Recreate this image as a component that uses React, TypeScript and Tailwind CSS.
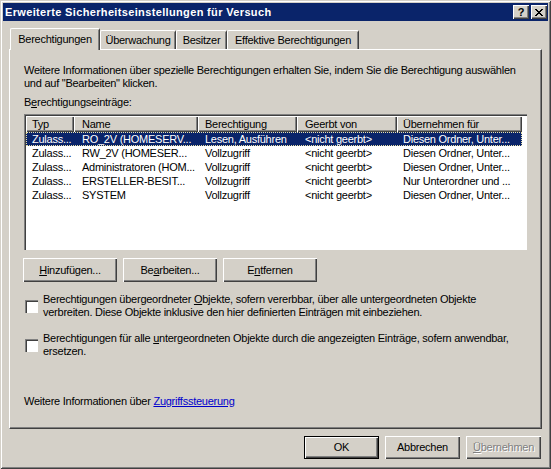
const raised =
  "shadow-[inset_1px_1px_0_#ffffff,inset_-1px_-1px_0_#404040,inset_-2px_-2px_0_#808080]";

const rows = [
  ["Zulass...", "RO_2V (HOMESERV...", "Lesen, Ausführen", "<nicht geerbt>", "Diesen Ordner, Unter..."],
  ["Zulass...", "RW_2V (HOMESER...", "Vollzugriff", "<nicht geerbt>", "Diesen Ordner, Unter..."],
  ["Zulass...", "Administratoren (HOM...", "Vollzugriff", "<nicht geerbt>", "Diesen Ordner, Unter..."],
  ["Zulass...", "ERSTELLER-BESIT...", "Vollzugriff", "<nicht geerbt>", "Nur Unterordner und ..."],
  ["Zulass...", "SYSTEM", "Vollzugriff", "<nicht geerbt>", "Diesen Ordner, Unter..."],
];

const cols = [
  { label: "Typ", w: "w-[48px]", pl: "pl-[6px]" },
  { label: "Name", w: "w-[124px]", pl: "pl-[8px]" },
  { label: "Berechtigung", w: "w-[99px]", pl: "pl-[7px]" },
  { label: "Geerbt von", w: "w-[100px]", pl: "pl-[8px]" },
  { label: "Übernehmen für", w: "w-[125px]", pl: "pl-[6px]" },
];

function Button({ children, w, primary }: { children: React.ReactNode; w: string; primary?: boolean }) {
  if (primary) {
    return (
      <div className={`${w} h-[23px] border border-black`}>
        <div className={`h-full flex items-center justify-center ${raised}`}>{children}</div>
      </div>
    );
  }
  return <div className={`${w} h-[23px] flex items-center justify-center ${raised}`}>{children}</div>;
}

function Checkbox({ children }: { children: React.ReactNode }) {
  return (
    <div className="flex items-center">
      <div className="w-[13px] h-[13px] ml-[1px] shrink-0 bg-white border-t border-l border-[#808080] border-r-white border-b-white">
        <div className="w-full h-full border-t border-l border-[#404040] border-r-[#d4d0c8] border-b-[#d4d0c8]" />
      </div>
      <div className="ml-[5px] leading-[13px] whitespace-nowrap">{children}</div>
    </div>
  );
}

function Tab({ label, active, w }: { label: string; active?: boolean; w: string }) {
  if (active) {
    return (
      <div
        className={`${w} h-[22px] -mb-[1px] relative z-10 bg-[#d4d0c8] border-l border-t border-white border-r border-r-[#404040] rounded-tl-[2px] rounded-tr-[2px] flex items-start pt-[2px] justify-center whitespace-nowrap`}
      >
        <div className="absolute right-0 top-[1px] bottom-0 w-[1px] bg-[#808080]" />
        {label}
      </div>
    );
  }
  return (
    <div
      className={`${w} h-[19px] relative bg-[#d4d0c8] border-l border-t border-white border-r border-r-[#404040] rounded-tl-[2px] rounded-tr-[2px] flex items-start pt-[1px] justify-center whitespace-nowrap`}
    >
      <div className="absolute right-0 top-[1px] bottom-0 w-[1px] bg-[#808080]" />
      {label}
    </div>
  );
}

export default function App() {
  return (
    <div className="w-[551px] h-[469px] bg-[#d4d0c8] p-[3px] text-[11px] tracking-[-0.25px] text-black font-['Liberation_Sans',Arial,sans-serif] shadow-[inset_1px_1px_0_#d4d0c8,inset_-1px_-1px_0_#404040,inset_2px_2px_0_#ffffff,inset_-2px_-2px_0_#808080] overflow-hidden select-none">
      {/* Title bar */}
      <div className="h-[18px] bg-[#0a246a] flex items-center justify-between pl-[2px] pr-[1px]">
        <span className="text-white font-bold text-[11px] tracking-[0.35px] leading-none whitespace-nowrap">
          Erweiterte Sicherheitseinstellungen für Versuch
        </span>
        <div className="flex gap-[2px]">
          <div className={`w-[16px] h-[14px] bg-[#d4d0c8] flex items-center justify-center font-bold text-[11px] tracking-normal leading-none ${raised}`}>
            ?
          </div>
          <div className={`w-[16px] h-[14px] bg-[#d4d0c8] flex items-center justify-center ${raised}`}>
            <svg width="8" height="7" viewBox="0 0 8 7" shapeRendering="crispEdges">
              <path d="M0 0h2v1h-2zM6 0h2v1h-2zM1 1h2v1h-2zM5 1h2v1h-2zM2 2h4v1h-4zM3 3h2v1h-2zM2 4h4v1h-4zM1 5h2v1h-2zM5 5h2v1h-2zM0 6h2v1h-2zM6 6h2v1h-2z" fill="#000" />
            </svg>
          </div>
        </div>
      </div>

      <div className="ml-[6px] w-[533px] mt-[7px]">
        {/* Tabs */}
        <div className="flex items-end pl-[1px] h-[21px]">
          <Tab label="Berechtigungen" active w="w-[90px]" />
          <Tab label="Überwachung" w="w-[76px]" />
          <Tab label="Besitzer" w="w-[51px]" />
          <Tab label="Effektive Berechtigungen" w="w-[132px]" />
        </div>

        {/* Panel */}
        <div className="h-[380px] border-t border-l border-white border-r border-b border-r-[#404040] border-b-[#404040]">
          <div className="h-full border-r border-b border-r-[#808080] border-b-[#808080] pl-[14px] pt-[14px] pr-[13px]">
            <p className="leading-[13px] whitespace-nowrap">
              Weitere Informationen über spezielle Berechtigungen erhalten Sie, indem Sie die Berechtigung auswählen
              <br />
              und auf "Bearbeiten" klicken.
            </p>
            <p className="leading-[13px] mt-[6px]">
              B<span className="underline">e</span>rechtigungseinträge:
            </p>

            {/* List view */}
            <div className="mt-[5px] w-[503px] h-[136px] border-t border-l border-[#808080] border-r-white border-b-white">
              <div className="h-full bg-white border-t border-l border-[#404040] border-r-[#d4d0c8] border-b-[#d4d0c8]">
                <div className="flex h-[16px]">
                  {cols.map((c) => (
                    <div key={c.label} className={`${c.w} ${c.pl} bg-[#d4d0c8] flex items-center whitespace-nowrap ${raised}`}>
                      {c.label}
                    </div>
                  ))}
                </div>
                {rows.map((r, i) => (
                  <div
                    key={i}
                    className={`flex w-[496px] h-[14px] items-center whitespace-nowrap ${
                      i === 0 ? "bg-[#0a246a] text-white outline-1 outline-dotted outline-[#e8e0a8] -outline-offset-1" : ""
                    }`}
                  >
                    {r.map((cell, j) => (
                      <div key={j} className={`${cols[j].w} ${cols[j].pl} overflow-hidden`}>
                        {cell}
                      </div>
                    ))}
                  </div>
                ))}
              </div>
            </div>

            {/* Buttons */}
            <div className="flex gap-[6px] mt-[8px] ml-[-1px]">
              <div className={`w-[94px] h-[24px] flex items-center justify-center ${raised}`}>
                <span><span className="underline">H</span>inzufügen...</span>
              </div>
              <div className={`w-[94px] h-[24px] flex items-center justify-center ${raised}`}>
                <span>Be<span className="underline">a</span>rbeiten...</span>
              </div>
              <div className={`w-[94px] h-[24px] flex items-center justify-center ${raised}`}>
                <span>E<span className="underline">n</span>tfernen</span>
              </div>
            </div>

            {/* Checkboxes */}
            <div className="mt-[11px]">
              <Checkbox>
                Berechtigungen übergeordneter <span className="underline">O</span>bjekte, sofern vererbbar, über alle untergeordneten Objekte
                <br />
                verbreiten. Diese Objekte inklusive den hier definierten Einträgen mit einbeziehen.
              </Checkbox>
            </div>
            <div className="mt-[13px]">
              <Checkbox>
                Berechtigungen für alle <span className="underline">u</span>ntergeordneten Objekte durch die angezeigten Einträge, sofern anwendbar,
                <br />
                ersetzen.
              </Checkbox>
            </div>

            <p className="mt-[37px] leading-[13px] whitespace-nowrap">
              Weitere Informationen über{" "}
              <span className="text-[#0000cc] underline">Zugriffssteuerung</span>
            </p>
          </div>
        </div>

        {/* Dialog buttons */}
        <div className="flex justify-end gap-[6px] mt-[7px] pr-[1px]">
          <Button w="w-[75px]" primary>
            OK
          </Button>
          <Button w="w-[75px]">Abbrechen</Button>
          <Button w="w-[75px]">
            <span className="text-[#808080] [text-shadow:1px_1px_0_#ffffff]">
              <span className="underline">Ü</span>bernehmen
            </span>
          </Button>
        </div>
      </div>
    </div>
  );
}
